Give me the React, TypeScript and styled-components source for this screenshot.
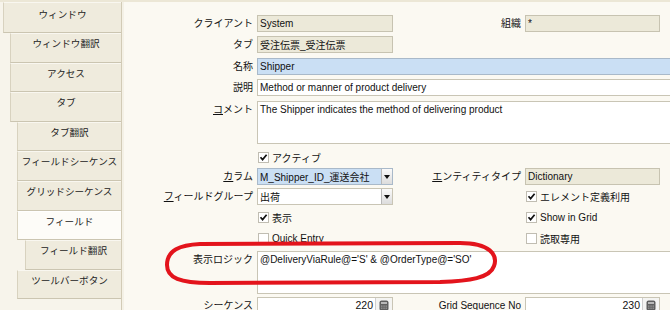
import React from "react";
import styled, { createGlobalStyle } from "styled-components";

const GlobalStyle = createGlobalStyle`
  html, body {
    margin: 0;
    padding: 0;
  }
  body {
    width: 670px;
    height: 310px;
    overflow: hidden;
    background: #efebdd;
    font-family: "Liberation Sans", "Noto Sans CJK JP", sans-serif;
    font-size: 10px;
    color: #151515;
  }
`;

type Tone = "readonly" | "mandatory" | "plain";

const tones: Record<Tone, { bg: string; border: string }> = {
  readonly: { bg: "#ece9d9", border: "#c7c3b1" },
  mandatory: { bg: "#cadff4", border: "#a9b9c9" },
  plain: { bg: "#ffffff", border: "#c9c5b5" },
};

const tabs = [
  { text: "ウィンドウ", indent: 3 },
  { text: "ウィンドウ翻訳", indent: 10 },
  { text: "アクセス", indent: 10 },
  { text: "タブ", indent: 10 },
  { text: "タブ翻訳", indent: 17 },
  { text: "フィールドシーケンス", indent: 17 },
  { text: "グリッドシーケンス", indent: 17 },
  { text: "フィールド", indent: 17, active: true },
  { text: "フィールド翻訳", indent: 25 },
  { text: "ツールバーボタン", indent: 17 },
];

const App: React.FC = () => {
  return (
    <>
      <GlobalStyle />
      <Screen>
        <Sidebar>
          {tabs.map((t, i) => (
            <Tab key={t.text} $indent={t.indent} $active={!!t.active} $first={i === 0}>
              {t.text}
            </Tab>
          ))}
        </Sidebar>
        <Content>
          <Form>
            <Label>クライアント</Label>
            <Field $tone="readonly">System</Field>
            <Label>組織</Label>
            <Field $tone="readonly">*</Field>
            <span />

            <Label>タブ</Label>
            <Field $tone="readonly">受注伝票_受注伝票</Field>
            <span />
            <span />
            <span />

            <Label>名称</Label>
            <Field $tone="mandatory" $wide>Shipper</Field>

            <Label>説明</Label>
            <Field $tone="plain" $wide>Method or manner of product delivery</Field>

            <Label $top>
              <u>コ</u>メント
            </Label>
            <TextArea $wide>The Shipper indicates the method of delivering product</TextArea>

            <span />
            <CheckItem checked>アクティブ</CheckItem>
            <span />
            <span />
            <span />

            <Label>
              <u>カ</u>ラム
            </Label>
            <Field $tone="mandatory">
              <FieldText>M_Shipper_ID_運送会社</FieldText>
              <DropButton />
            </Field>
            <Label>
              <u>エ</u>ンティティタイプ
            </Label>
            <Field $tone="readonly">Dictionary</Field>
            <span />

            <Label>
              <u>フ</u>ィールドグループ
            </Label>
            <Field $tone="plain">
              <FieldText>出荷</FieldText>
              <DropButton />
            </Field>
            <span />
            <CheckItem checked>エレメント定義利用</CheckItem>
            <span />

            <span />
            <CheckItem checked>表示</CheckItem>
            <span />
            <CheckItem checked>Show in Grid</CheckItem>
            <span />

            <span />
            <CheckItem>Quick Entry</CheckItem>
            <span />
            <CheckItem>読取専用</CheckItem>
            <span />

            <Label $top>表示ロジック</Label>
            <TextArea $wide>@DeliveryViaRule@='S' &amp; @OrderType@='SO'</TextArea>

            <Label>シーケンス</Label>
            <NumberField value="220" />
            <Label>
              <u>G</u>rid Sequence No
            </Label>
            <NumberField value="230" />
            <span />
          </Form>
          <Highlight width="345" height="55" viewBox="0 0 345 55">
            <path
              d="M40 8 L300 7 C330 7 338 19 334 30 C330 42 310 45 280 46 L50 47 C20 47 7 42 7 29 C7 14 20 9 40 8 Z"
              fill="none"
              stroke="#e3141c"
              strokeWidth="4"
              strokeLinejoin="round"
            />
          </Highlight>
        </Content>
      </Screen>
    </>
  );
};

const CheckItem: React.FC<{ checked?: boolean; children: React.ReactNode }> = ({ checked, children }) => (
  <Check>
    <Box>
      {checked && (
        <svg width="9" height="9" viewBox="0 0 9 9">
          <path d="M1.5 4.2 L3.6 6.6 L7.6 1.8" fill="none" stroke="#111" strokeWidth="1.7" />
        </svg>
      )}
    </Box>
    <span>{children}</span>
  </Check>
);

const NumberField: React.FC<{ value: string }> = ({ value }) => (
  <Field $tone="plain">
    <NumberText>{value}</NumberText>
    <CalcButton>
      <svg width="10" height="11" viewBox="0 0 10 11">
        <rect x="0.5" y="0.5" width="9" height="10" rx="2" fill="#5f5f5f" />
        <rect x="2" y="2" width="6" height="2" fill="#b9b9b9" />
        <rect x="2" y="5.5" width="1.5" height="1.2" fill="#9a9a9a" />
        <rect x="4.3" y="5.5" width="1.5" height="1.2" fill="#9a9a9a" />
        <rect x="6.5" y="5.5" width="1.5" height="1.2" fill="#9a9a9a" />
        <rect x="2" y="7.6" width="1.5" height="1.2" fill="#9a9a9a" />
        <rect x="4.3" y="7.6" width="1.5" height="1.2" fill="#9a9a9a" />
        <rect x="6.5" y="7.6" width="1.5" height="1.2" fill="#9a9a9a" />
      </svg>
    </CalcButton>
  </Field>
);

export default App;

const Screen = styled.div`
  display: flex;
  width: 670px;
  height: 310px;
  padding-top: 2px;
  box-sizing: border-box;
  overflow: hidden;
  background: #ece7d6;
`;

const Sidebar = styled.div`
  width: 121px;
  flex-shrink: 0;
  display: flex;
  flex-direction: column;
  background: #f7f4eb;
  border-right: 1px solid #d2cbb6;
`;

const Tab = styled.div<{ $indent: number; $active: boolean; $first: boolean }>`
  margin-left: ${(p) => p.$indent}px;
  height: ${(p) => (p.$first ? 31 : 29.6)}px;
  box-sizing: border-box;
  padding-top: ${(p) => (p.$first ? 5 : 3)}px;
  text-align: center;
  font-family: "Noto Sans CJK JP", sans-serif;
  font-size: 9.6px;
  line-height: 12px;
  color: #222;
  white-space: nowrap;
  background: ${(p) => (p.$active ? "#fdfcf8" : "#efebdd")};
  border-top: 1px solid ${(p) => (p.$active ? "#ffffff" : "#f9f7f0")};
  border-left: 1px solid #d8d2bf;
  border-bottom: 1px solid #cbc5b1;
`;

const Content = styled.div`
  position: relative;
  flex: 1;
  overflow: hidden;
  background: #fbf9f2;
  border-left: 2px solid #f4f1e6;
`;

const Form = styled.div`
  display: grid;
  width: 596px;
  padding-top: 11px;
  grid-template-columns: 133px 136px 132px 135px 60px;
  grid-template-rows: 21px 21px 22px 21px 49px 20px 19px 21px 21px 20px 47px 20px;
  align-items: center;
`;

const Label = styled.div<{ $top?: boolean }>`
  align-self: ${(p) => (p.$top ? "start" : "center")};
  margin-top: ${(p) => (p.$top ? 3 : 0)}px;
  height: 17px;
  line-height: 17px;
  text-align: right;
  padding-right: 4px;
  white-space: nowrap;
  color: #111;

  u {
    text-decoration: underline;
    text-underline-offset: 1px;
  }
`;

const Field = styled.div<{ $tone: Tone; $wide?: boolean }>`
  ${(p) => (p.$wide ? "grid-column: 2 / -1;" : "")}
  display: flex;
  align-items: center;
  height: 17px;
  box-sizing: border-box;
  padding-left: 2px;
  white-space: nowrap;
  overflow: hidden;
  background: ${(p) => tones[p.$tone].bg};
  border: 1px solid ${(p) => tones[p.$tone].border};
  color: #111;
`;

const FieldText = styled.span`
  flex: 1;
  overflow: hidden;
`;

const NumberText = styled.span`
  flex: 1;
  text-align: right;
  padding-right: 2px;
  font-size: 10.5px;
`;

const DropButton = styled.span`
  position: relative;
  width: 11px;
  height: 100%;
  box-sizing: border-box;
  border-left: 1px solid #b8b8b8;
  background: linear-gradient(#fafafa, #dcdcdc);

  &::after {
    content: "";
    position: absolute;
    left: 2px;
    top: 6px;
    border-left: 3px solid transparent;
    border-right: 3px solid transparent;
    border-top: 4px solid #111;
  }
`;

const CalcButton = styled.span`
  display: flex;
  align-items: center;
  justify-content: center;
  width: 17px;
  height: 100%;
  box-sizing: border-box;
  border-left: 1px solid #cfcfcf;
  background: #f4f4f2;
`;

const TextArea = styled.div<{ $wide?: boolean }>`
  ${(p) => (p.$wide ? "grid-column: 2 / -1;" : "")}
  align-self: start;
  margin-top: 3px;
  height: 43px;
  box-sizing: border-box;
  padding: 2px 2px 0;
  line-height: 12px;
  white-space: nowrap;
  background: #ffffff;
  border: 1px solid #c9c5b5;
  color: #111;
`;

const Check = styled.div`
  display: flex;
  align-items: center;
  gap: 3px;
  padding-left: 1px;
  white-space: nowrap;
  color: #111;
`;

const Box = styled.span`
  display: flex;
  align-items: center;
  justify-content: center;
  width: 11px;
  height: 11px;
  box-sizing: border-box;
  border: 1px solid #c0bdb2;
  background: #ffffff;
`;

const Highlight = styled.svg`
  position: absolute;
  left: 36px;
  top: 234px;
  pointer-events: none;
`;
